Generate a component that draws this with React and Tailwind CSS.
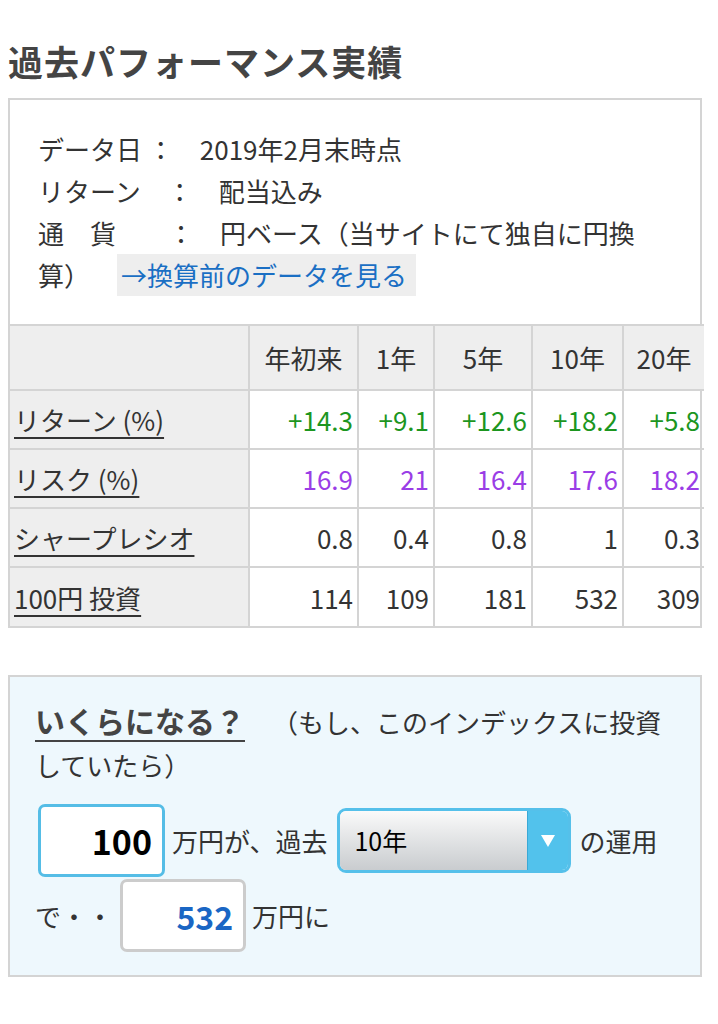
import React from 'react';

const cols = ['年初来', '1年', '5年', '10年', '20年'];

const rows = [
  { label: 'リターン (%)', values: ['+14.3', '+9.1', '+12.6', '+18.2', '+5.8'], color: 'text-[#1c961f]' },
  { label: 'リスク (%)', values: ['16.9', '21', '16.4', '17.6', '18.2'], color: 'text-[#9a3de6]' },
  { label: 'シャープレシオ', values: ['0.8', '0.4', '0.8', '1', '0.3'], color: 'text-[#333]' },
  { label: '100円 投資', values: ['114', '109', '181', '532', '309'], color: 'text-[#333]' },
];

const App = () => {
  return (
    <div
      className="w-[718px] min-h-[1024px] bg-white text-[#333] pt-[38px] px-[8px]"
      style={{ fontFamily: '"Noto Sans CJK JP", "Noto Sans", sans-serif' }}
    >
      {/* ================= TITLE ================= */}
      <h1 className="text-[35px] leading-[46px] font-bold text-[#444] tracking-[1px] mb-[14px]">
        過去パフォーマンス実績
      </h1>

      {/* ================= INFO + TABLE ================= */}
      <div className="border-2 border-[#d4d4d4] w-[694px]">
        <div className="pl-[28px] pr-[14px] pt-[28px] pb-[28px] text-[26px] leading-[42px]">
          <p>データ日 ：　2019年2月末時点</p>
          <p>リターン　：　配当込み</p>
          <p>
            {'通　貨　　：　円ベース（当サイトにて独自に円換'}
            <br />
            {'算）　'}
            <span className="inline-block ml-[14px] bg-[#eeeeee] text-[#1a6fc4] pl-[4px] pr-[9px]">
              →換算前のデータを見る
            </span>
          </p>
        </div>

        <table className="w-full table-fixed border-collapse text-[26px]">
          <colgroup>
            <col className="w-[239px]" />
            <col className="w-[109px]" />
            <col className="w-[76px]" />
            <col className="w-[98px]" />
            <col className="w-[91px]" />
            <col className="w-[81px]" />
          </colgroup>
          <thead>
            <tr className="bg-[#eeeeee] h-[65px]">
              <th className="border-2 border-l-0 border-[#d4d4d4]"></th>
              {cols.map(col => (
                <th
                  key={col}
                  className="border-2 border-[#d4d4d4] last:border-r-0 font-normal text-center"
                >
                  {col}
                </th>
              ))}
            </tr>
          </thead>
          <tbody>
            {rows.map(row => (
              <tr key={row.label} className="h-[59px]">
                <td className="bg-[#eeeeee] border-2 border-l-0 border-b-0 border-[#d4d4d4] pl-[4px] text-left">
                  <span className="underline underline-offset-[6px] decoration-[2px]">
                    {row.label}
                  </span>
                </td>
                {row.values.map((v, i) => (
                  <td
                    key={i}
                    className={`border-2 border-b-0 border-[#d4d4d4] last:border-r-0 text-right pr-[4px] ${row.color}`}
                  >
                    {v}
                  </td>
                ))}
              </tr>
            ))}
          </tbody>
        </table>
      </div>

      {/* ================= SIMULATOR ================= */}
      <div className="mt-[47px] w-[694px] border-2 border-[#d4d4d4] bg-[#eef8fd] pl-[25px] pr-[14px] pt-[22px] pb-[23px]">
        <p className="text-[26px] leading-[43px]">
          <span className="text-[30px] font-bold text-[#444] underline underline-offset-[7px] decoration-[2px]">
            いくらになる？
          </span>
          <span className="ml-[27px]">（もし、このインデックスに投資</span>
          <br />
          していたら）
        </p>

        <div className="mt-[18px] flex items-center text-[26px]">
          <div className="ml-[3px] w-[127px] h-[73px] bg-white border-[3px] border-[#55bde6] rounded-[7px] flex items-center justify-end pr-[10px] text-[34px] font-bold text-black">
            100
          </div>
          <span className="ml-[7px]">万円が、過去</span>
          <div className="ml-[10px] w-[234px] h-[65px] border-[3px] border-[#55c0ea] rounded-[9px] flex overflow-hidden">
            <div className="flex-1 flex items-center pl-[14px] bg-gradient-to-b from-[#fafafa] to-[#c9cccf] text-black text-[25px]">
              10年
            </div>
            <div className="w-[41px] bg-[#52c2ec] border-l border-[#3ba9d6] flex items-center justify-center">
              <svg width="16" height="14" viewBox="0 0 16 14">
                <path d="M1 1 H15 L8 13 Z" fill="#ffffff" />
              </svg>
            </div>
          </div>
          <span className="ml-[8px]">の運用</span>
        </div>

        <div className="mt-[2px] flex items-center text-[26px]">
          <span>で・・</span>
          <div className="ml-[7px] w-[126px] h-[73px] bg-white border-[3px] border-[#cccccc] rounded-[7px] flex items-center justify-end pr-[10px] text-[32px] font-bold text-[#1a66c4]">
            532
          </div>
          <span className="ml-[6px]">万円に</span>
        </div>
      </div>
    </div>
  );
};

export default App;
